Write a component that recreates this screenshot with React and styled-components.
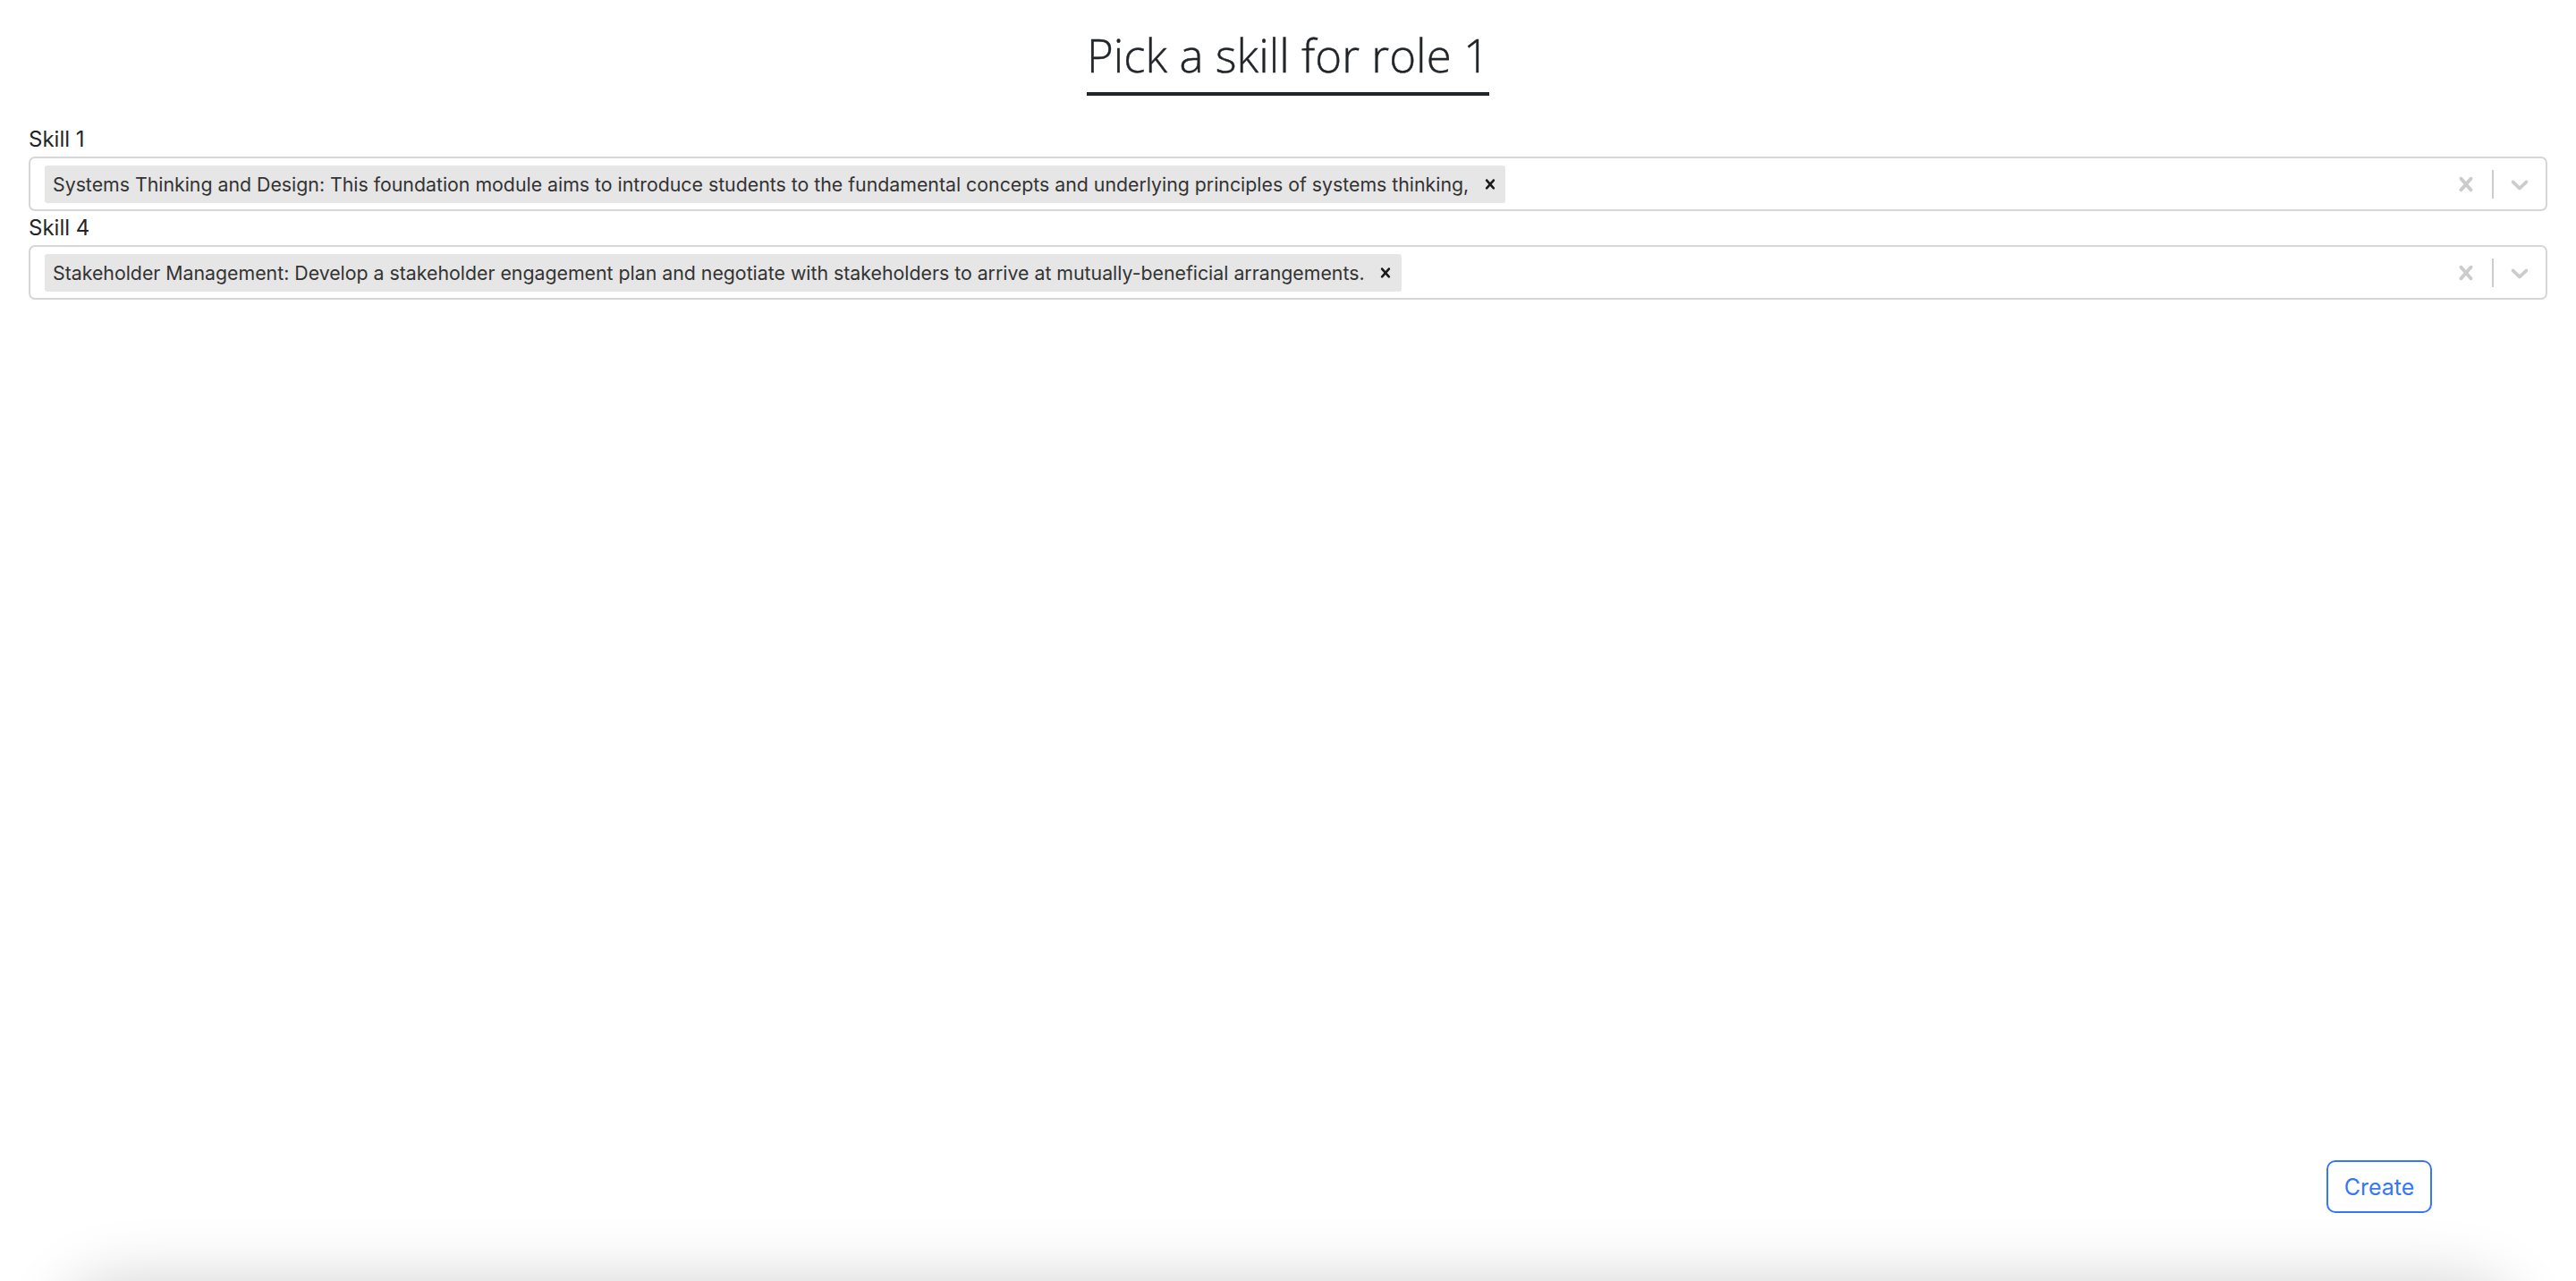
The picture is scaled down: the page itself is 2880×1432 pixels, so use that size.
import React from 'react'
import styled, { createGlobalStyle } from 'styled-components'

const skills = [
   {
      label: 'Skill 1',
      value:
         'Systems Thinking and Design: This foundation module aims to introduce students to the fundamental concepts and underlying principles of systems thinking,',
   },
   {
      label: 'Skill 4',
      value:
         'Stakeholder Management: Develop a stakeholder engagement plan and negotiate with stakeholders to arrive at mutually-beneficial arrangements.',
   },
]

const CROSS =
   'M14.348 14.849c-0.469 0.469-1.229 0.469-1.697 0l-2.651-3.030-2.651 3.029c-0.469 0.469-1.229 0.469-1.697 0-0.469-0.469-0.469-1.229 0-1.697l2.758-3.15-2.759-3.152c-0.469-0.469-0.469-1.228 0-1.697s1.228-0.469 1.697 0l2.652 3.031 2.651-3.031c0.469-0.469 1.228-0.469 1.697 0s0.469 1.229 0 1.697l-2.758 3.152 2.758 3.15c0.469 0.469 0.469 1.229 0 1.698z'

const CHEVRON =
   'M4.516 7.548c0.436-0.446 1.043-0.481 1.576 0l3.908 3.747 3.908-3.747c0.533-0.481 1.141-0.446 1.574 0 0.436 0.445 0.408 1.197 0 1.615-0.406 0.418-4.695 4.502-4.695 4.502-0.217 0.223-0.502 0.335-0.787 0.335s-0.57-0.112-0.789-0.335c0 0-4.287-4.084-4.695-4.502s-0.436-1.17 0-1.615z'

const Icon = ({ d, size }) => (
   <svg width={size} height={size} viewBox="0 0 20 20" aria-hidden="true">
      <path d={d} fill="currentColor" />
   </svg>
)

const SkillSelect = ({ label, value }) => (
   <Field>
      <Label>{label}</Label>
      <Control>
         <Values>
            <Chip>
               <ChipLabel>{value}</ChipLabel>
               <ChipRemove>
                  <Icon d={CROSS} size={22} />
               </ChipRemove>
            </Chip>
         </Values>
         <Indicators>
            <Indicator>
               <Icon d={CROSS} size={32} />
            </Indicator>
            <Separator />
            <Indicator>
               <Icon d={CHEVRON} size={32} />
            </Indicator>
         </Indicators>
      </Control>
   </Field>
)

export default function App() {
   return (
      <>
         <GlobalStyle />
         <Page>
            <Content>
               <TitleWrap>
                  <Title>Pick a skill for role 1</Title>
               </TitleWrap>
               {skills.map(s => (
                  <SkillSelect key={s.label} label={s.label} value={s.value} />
               ))}
            </Content>
            <Footer>
               <CreateButton>Create</CreateButton>
            </Footer>
         </Page>
         <Drawer />
      </>
   )
}

const GlobalStyle = createGlobalStyle`
   html, body {
      margin: 0;
      padding: 0;
      background: #fff;
      overflow: hidden;
   }
   body {
      font-family: Inter, "Liberation Sans", sans-serif;
      color: #212529;
   }
   * { box-sizing: border-box; }
`

const Page = styled.div`
   min-height: 100vh;
   display: flex;
   flex-direction: column;
`

const Content = styled.main`
   flex: 1;
   padding: 30px 32px 0;
   display: flex;
   flex-direction: column;
`

const TitleWrap = styled.div`
   display: flex;
   justify-content: center;
   margin-bottom: 30px;
`

const Title = styled.h1`
   margin: 0;
   font-family: "Open Sans", Inter, sans-serif;
   font-weight: 300;
   font-size: 51px;
   line-height: 62px;
   color: #212529;
   -webkit-text-stroke: 0.4px #212529;
   padding-bottom: 11px;
   border-bottom: 4px solid #212529;
`

const Field = styled.div`
   display: flex;
   flex-direction: column;
`

const Label = styled.label`
   font-size: 24px;
   line-height: 38px;
   color: #212529;
`

const Control = styled.div`
   height: 61px;
   display: flex;
   align-items: center;
   border: 2px solid #d6d6d6;
   border-radius: 7px;
   background: #fff;
`

const Values = styled.div`
   flex: 1;
   display: flex;
   align-items: center;
   padding-left: 16px;
   min-width: 0;
`

const Chip = styled.div`
   display: flex;
   align-items: center;
   height: 42px;
   background: #e6e6e6;
   border-radius: 3px;
   color: #333;
`

const ChipLabel = styled.span`
   font-size: 21.3px;
   padding: 0 6px 0 9px;
   white-space: nowrap;
`

const ChipRemove = styled.span`
   display: flex;
   align-items: center;
   justify-content: center;
   width: 35px;
   height: 100%;
   color: #1a1a1a;
`

const Indicators = styled.div`
   display: flex;
   align-items: center;
   align-self: stretch;
`

const Indicator = styled.div`
   display: flex;
   align-items: center;
   padding: 0 13px;
   color: #cccccc;
`

const Separator = styled.span`
   width: 2px;
   height: 32px;
   background: #cccccc;
`

const Footer = styled.footer`
   display: flex;
   justify-content: flex-end;
   padding: 0 161px 76px 0;
`

const CreateButton = styled.button`
   width: 118px;
   height: 59px;
   border: 2px solid #3478f6;
   border-radius: 10px;
   background: #fff;
   color: #3478f6;
   font-family: Inter, "Liberation Sans", sans-serif;
   font-size: 25px;
   cursor: pointer;
`

const Drawer = styled.div`
   position: fixed;
   left: 70px;
   right: 70px;
   top: 100vh;
   height: 200px;
   border-radius: 60px;
   background: #fff;
   box-shadow: 0 0 70px rgba(0, 0, 0, 0.18);
`
